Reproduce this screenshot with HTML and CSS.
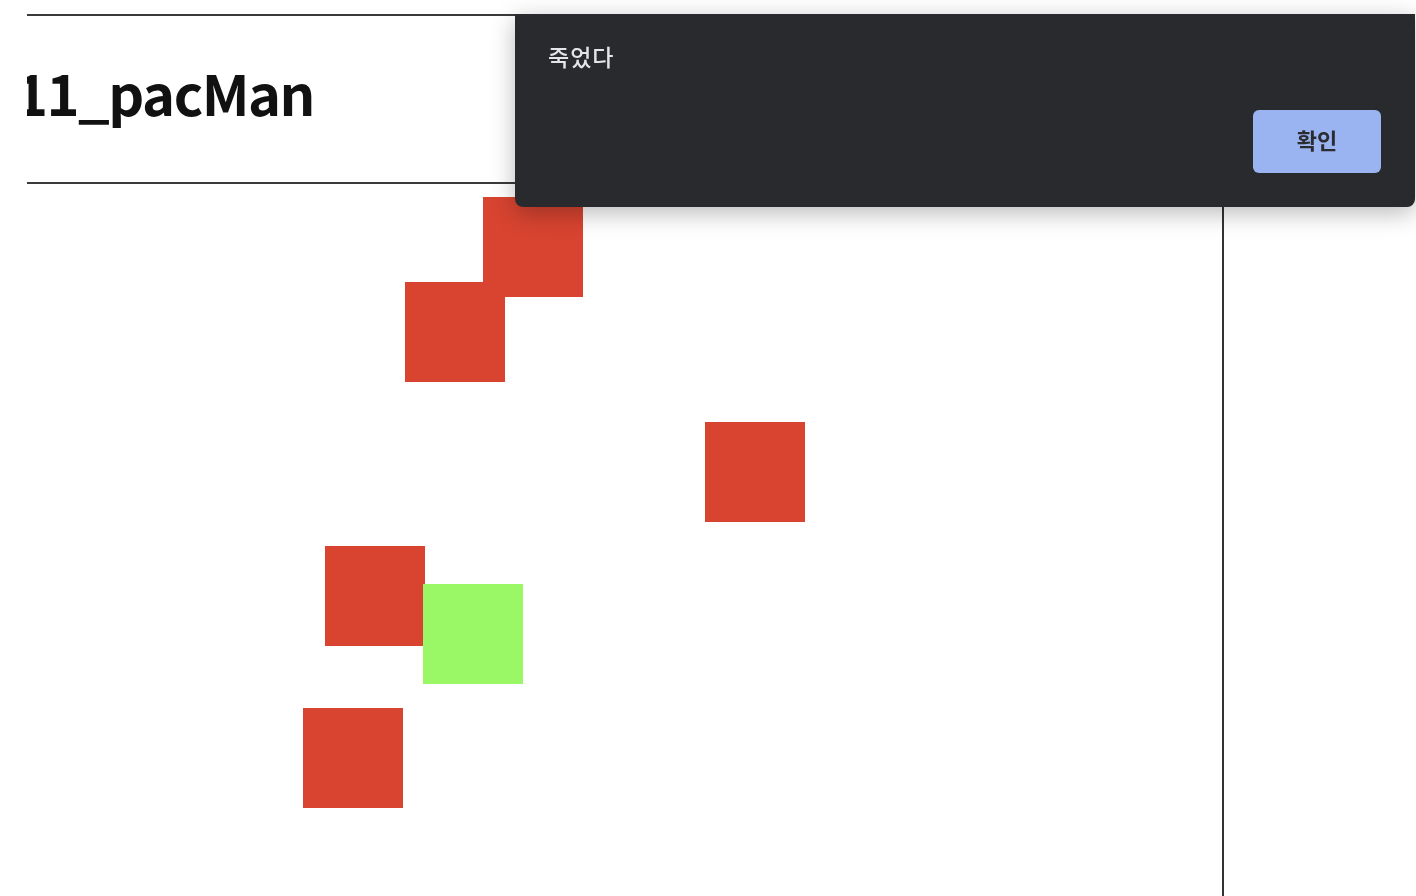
FILE: index.html
```html
<!DOCTYPE html>
<html lang="ko">
<head>
<meta charset="utf-8">
<title>11_pacMan</title>
<link rel="stylesheet" href="styles.css">
</head>
<body>
<div class="viewport">
  <header class="header">
    <h1 class="title">11_pacMan</h1>
  </header>
  <main class="board">
    <div class="cell ghost" style="left:456px; top:13px"></div>
    <div class="cell ghost" style="left:378px; top:98px"></div>
    <div class="cell ghost" style="left:678px; top:238px"></div>
    <div class="cell ghost" style="left:298px; top:362px"></div>
    <div class="cell player" style="left:396px; top:400px"></div>
    <div class="cell ghost" style="left:276px; top:524px"></div>
  </main>
</div>
<div class="dialog" role="alertdialog">
  <p class="dialog-msg">죽었다</p>
  <div class="dialog-actions">
    <button class="dialog-btn">확인</button>
  </div>
</div>
</body>
</html>
```

FILE: styles.css
```css
html, body {
  margin: 0;
  padding: 0;
  background: #ffffff;
  height: 100%;
  overflow: hidden;
}

.viewport {
  padding: 14px 0 0 27px;
  font-family: "Noto Sans CJK KR", "Noto Sans", sans-serif;
}

.header {
  width: 1195px;
  height: 166px;
  box-sizing: content-box;
  border-top: 2px solid #3a3a3a;
  border-bottom: 2px solid #3a3a3a;
  overflow: hidden;
  display: flex;
  align-items: center;
}

.title {
  margin: 0 0 14px -12px;
  font-size: 56px;
  font-weight: 700;
  color: #111111;
  letter-spacing: -1.5px;
  line-height: 1;
}

.board {
  position: relative;
  width: 1195px;
  height: 720px;
  border-right: 2px solid #333333;
}

.cell {
  position: absolute;
  width: 100px;
  height: 100px;
}

.ghost {
  background: #d84430;
}

.player {
  background: #9af766;
}

.dialog {
  position: fixed;
  top: 14px;
  left: 515px;
  width: 900px;
  height: 193px;
  box-sizing: border-box;
  background: #292a2d;
  border-radius: 0 0 8px 8px;
  box-shadow: 0 6px 24px rgba(0, 0, 0, 0.28);
  padding: 29px 34px 34px 33px;
  display: flex;
  flex-direction: column;
  justify-content: space-between;
  font-family: "Noto Sans CJK KR", "Noto Sans", sans-serif;
}

.dialog-msg {
  margin: 0;
  color: #e3e5e8;
  font-size: 23px;
  font-weight: 500;
  letter-spacing: 1px;
  line-height: 1.2;
}

.dialog-actions {
  display: flex;
  justify-content: flex-end;
}

.dialog-btn {
  width: 128px;
  height: 63px;
  border: none;
  border-radius: 6px;
  background: #99b4f0;
  color: #2b2c31;
  font-family: "Noto Sans CJK KR", "Noto Sans", sans-serif;
  font-size: 22px;
  font-weight: 700;
  padding: 0 0 5px 0;
}
```
